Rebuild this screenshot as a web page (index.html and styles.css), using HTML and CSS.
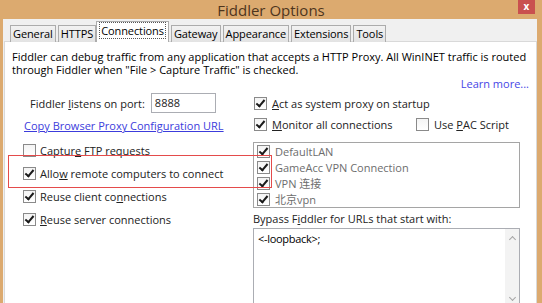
FILE: index.html
```html
<!DOCTYPE html>
<html lang="en">
<head>
<meta charset="UTF-8">
<title>Fiddler Options</title>
<link rel="stylesheet" href="styles.css">
</head>
<body>
  <div class="window">
    <div class="titlebar">
      <span></span>
      <div class="title">Fiddler Options</div>
      <div class="close">x</div>
    </div>
    <div class="client">
      <div class="tabs">
        <div class="tab">General</div>
        <div class="tab">HTTPS</div>
        <div class="tab active"><span class="focus">Connections</span></div>
        <div class="tab">Gateway</div>
        <div class="tab">Appearance</div>
        <div class="tab">Extensions</div>
        <div class="tab">Tools</div>
      </div>
      <div class="panel">
        <p class="intro">Fiddler can debug traffic from any application that accepts a HTTP Proxy. All WinINET traffic is routed through Fiddler when "File &gt; Capture Traffic" is checked.</p>
        <div class="learn"><a href="#">Learn more...</a></div>

        <div class="columns">
          <div class="left">
            <div class="port-row">
              <span>Fiddler <u>l</u>istens on port:</span>
              <div class="input">8888</div>
            </div>
            <a class="copy-link" href="#">Copy Browser Proxy Configuration URL</a>
            <div class="checks">
              <label class="check"><span class="box"></span><span>Captur<u>e</u> FTP requests</span></label>
              <label class="check"><span class="box on"></span><span>Allo<u>w</u> remote computers to connect</span></label>
              <label class="check"><span class="box on"></span><span>Reuse client co<u>n</u>nections</span></label>
              <label class="check"><span class="box on"></span><span><u>R</u>euse server connections</span></label>
            </div>
          </div>

          <div class="right">
            <label class="check row"><span class="box on"></span><span><u>A</u>ct as system proxy on startup</span></label>
            <div class="row pair">
              <label class="check"><span class="box on"></span><span><u>M</u>onitor all connections</span></label>
              <label class="check"><span class="box"></span><span>Use <u>P</u>AC Script</span></label>
            </div>
            <div class="listbox">
              <div class="item"><span class="box on"></span><span>DefaultLAN</span></div>
              <div class="item"><span class="box on"></span><span>GameAcc VPN Connection</span></div>
              <div class="item"><span class="box on"></span><span>VPN 连接</span></div>
              <div class="item"><span class="box on"></span><span>北京vpn</span></div>
            </div>
            <div class="bypass-label">Bypass F<u>i</u>ddler for URLs that start with:</div>
            <div class="textarea">
              <div class="text">&lt;-loopback&gt;;</div>
              <div class="scroll">
                <span class="arrow up"></span>
                <span class="arrow down"></span>
              </div>
            </div>
          </div>
        </div>
      </div>
    </div>
  </div>
  <div class="highlight"></div>
</body>
</html>
```

FILE: styles.css
```css
body {
  margin: 0;
  height: 303px;
  overflow: hidden;
  background: #dcaa6f;
  font-family: "Open Sans", "Noto Sans CJK SC", sans-serif;
  font-size: 11px;
  color: #000;
  position: relative;
}

.window {
  height: 303px;
  display: flex;
  flex-direction: column;
}

.titlebar {
  height: 19px;
  flex: none;
  display: grid;
  grid-template-columns: 1fr auto 1fr;
  align-items: start;
}

.title {
  font-size: 15px;
  line-height: 20px;
  color: #4e351d;
}

.close {
  justify-self: end;
  margin-right: 7px;
  width: 17px;
  height: 14px;
  background: #c9504f;
  color: #fff;
  font-size: 10px;
  line-height: 12px;
  text-align: center;
  font-weight: bold;
}

.client {
  flex: 1;
  display: flex;
  flex-direction: column;
  margin: 0 5px 0 3px;
  background: #f0f0f0;
  padding-top: 2px;
}

.tabs {
  display: flex;
  align-items: flex-end;
  padding-left: 7px;
  height: 20px;
  flex: none;
  position: relative;
  z-index: 1;
  letter-spacing: -0.1px;
}

.tab {
  height: 16px;
  line-height: 15px;
  padding: 0 2px;
  margin-right: 2px;
  border: 1px solid #acacac;
  border-bottom: none;
  background: linear-gradient(#f2f2f2, #e3e3e3);
  margin-bottom: -1px;
}

.tab.active {
  height: 20px;
  line-height: 18px;
  margin: 0 0 -1px -2px;
  padding: 0 2px;
  background: #fff;
  position: relative;
  z-index: 2;
}

.tab.active + .tab {
  margin-left: 2px;
}

.focus {
  border: 1px dotted #555;
  padding: 0 1px;
}

.panel {
  flex: 1;
  margin-left: 1px;
  background: #fff;
  border: 1px solid #d9d9d9;
  border-bottom: none;
  padding: 8px 7px 0 7px;
  overflow: hidden;
}

.intro {
  margin: 0;
  line-height: 13px;
}

.learn {
  text-align: right;
  line-height: 13px;
  margin-top: 1px;
}

.learn a {
  color: #4646e6;
  text-decoration: none;
}

.columns {
  display: grid;
  grid-template-columns: 242px 266px;
  margin-top: 3px;
}

.left {
  display: flex;
  flex-direction: column;
}

.port-row {
  display: flex;
  align-items: center;
  height: 20px;
  padding-left: 18px;
  color: #222;
}

.input {
  margin-left: 6px;
  width: 60px;
  height: 18px;
  border: 1px solid #abadb3;
  line-height: 18px;
  padding-left: 3px;
}

.copy-link {
  margin: 6px 0 0 12px;
  line-height: 14px;
  color: #3c3cdc;
}

.checks {
  display: flex;
  flex-direction: column;
  gap: 7px;
  margin: 9px 0 0 11px;
}

.check {
  display: flex;
  align-items: center;
  height: 16px;
  color: #222;
  white-space: nowrap;
}

.box {
  flex: none;
  position: relative;
  width: 11px;
  height: 11px;
  border: 1px solid #8a8a8a;
  background: linear-gradient(#f4f4f4, #fff);
  margin-right: 4px;
}

.box.on::after {
  content: "";
  position: absolute;
  left: 3px;
  top: 0;
  width: 3px;
  height: 7px;
  border: solid #1a1a1a;
  border-width: 0 2px 2px 0;
  transform: rotate(40deg);
}

.right {
  display: flex;
  flex-direction: column;
}

.right .row {
  height: 20px;
}

.right .box {
  margin-right: 5px;
}

.pair {
  display: grid;
  grid-template-columns: 162px auto;
  align-items: center;
  margin-top: 1px;
}

.listbox {
  margin: 8px 0 0 -1px;
  width: 265px;
  height: 64px;
  border: 1px solid #a5a5a5;
}

.item {
  display: flex;
  align-items: center;
  height: 16px;
  padding-left: 3px;
  color: #6d6d6d;
}

.bypass-label {
  margin: 4px 0 0 -1px;
  line-height: 14px;
  color: #222;
}

.textarea {
  display: flex;
  margin: 2px 0 0 -1px;
  width: 265px;
  height: 75px;
  border: 1px solid #abadb3;
}

.text {
  flex: 1;
  padding: 3px 4px;
  line-height: 14px;
  letter-spacing: -0.3px;
}

.scroll {
  width: 14px;
  background: #f3f3f3;
  display: flex;
  flex-direction: column;
  justify-content: space-between;
  align-items: center;
  padding: 8px 0 4px;
}

.arrow {
  width: 4px;
  height: 4px;
  border: solid #a6a6a6;
  border-width: 1px 0 0 1px;
}

.arrow.up {
  transform: rotate(45deg);
}

.arrow.down {
  transform: rotate(225deg);
}

.highlight {
  position: absolute;
  left: 8px;
  top: 155px;
  width: 262px;
  height: 31px;
  border: 1.5px solid #e44b4b;
}
```
